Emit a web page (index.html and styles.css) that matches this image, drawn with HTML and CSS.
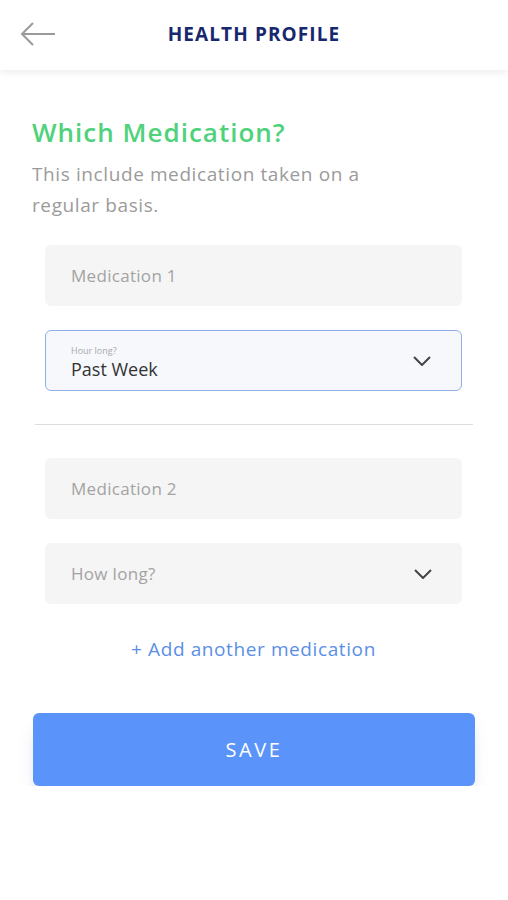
FILE: index.html
```html
<!DOCTYPE html>
<html>
<head>
<title>Health Profile</title>
<link rel="stylesheet" href="styles.css">
</head>
<body>
<div class="header">
    <button class="back">
        <svg width="36" height="26" viewBox="0 0 36 26"><path d="M35 13H2M13 2L2 13l11 11" fill="none" stroke="#9a9a9a" stroke-width="2"/></svg>
    </button>
    <h1 class="title">HEALTH PROFILE</h1>
</div>

<div class="content">
    <h2 class="question">Which Medication?</h2>
    <p class="hint">This include medication taken on a<br>regular basis.</p>

    <div class="fields">
        <div class="field">
            <span class="placeholder">Medication 1</span>
        </div>
        <div class="field select active">
            <div class="value">
                <span class="label">Hour long?</span>
                <span class="text">Past Week</span>
            </div>
            <svg class="chev" width="18" height="10" viewBox="0 0 18 10"><path d="M1 1l8 8 8-8" fill="none" stroke="#444" stroke-width="2"/></svg>
        </div>
    </div>

    <hr class="divider">

    <div class="fields">
        <div class="field">
            <span class="placeholder">Medication 2</span>
        </div>
        <div class="field select">
            <span class="placeholder">How long?</span>
            <svg class="chev" width="18" height="10" viewBox="0 0 18 10"><path d="M1 1l8 8 8-8" fill="none" stroke="#444" stroke-width="2"/></svg>
        </div>
    </div>

    <a class="add" href="#">+ Add another medication</a>

    <button class="save">SAVE</button>
</div>
</body>
</html>
```

FILE: styles.css
```css
body {
    margin: 0;
    font-family: "Open Sans", "Lato", sans-serif;
    background: #fff;
}

.header {
    height: 70px;
    display: flex;
    align-items: center;
    justify-content: center;
    position: relative;
    box-shadow: 0 2px 8px rgba(0, 0, 0, 0.08);
}

.back {
    position: absolute;
    left: 20px;
    top: 21px;
    padding: 0;
    border: none;
    background: none;
}

.title {
    margin: 0 0 2px 0;
    font-size: 19px;
    font-weight: 700;
    letter-spacing: 1.1px;
    color: #17286e;
}

.content {
    padding: 44px 33px 0 32px;
}

.question {
    margin: 0;
    font-size: 26px;
    font-weight: 600;
    letter-spacing: 1px;
    color: #4fd27b;
}

.hint {
    margin: 9px 0 0 0;
    font-size: 19px;
    line-height: 31px;
    letter-spacing: 0.6px;
    color: #9b9b9b;
}

.fields {
    display: flex;
    flex-direction: column;
    gap: 24px;
    padding: 0 13px;
}

.content > .fields:first-of-type {
    margin-top: 24px;
}

.field {
    height: 61px;
    box-sizing: border-box;
    background: #f5f5f5;
    border-radius: 6px;
    padding: 0 30px 0 26px;
    display: flex;
    align-items: center;
    justify-content: space-between;
}

.field.active {
    border: 1.5px solid #8eb0e8;
    background: #f6f8fc;
    padding-left: 25px;
}

.placeholder {
    font-size: 17px;
    letter-spacing: 0.3px;
    color: #a3a3a3;
}

.value {
    display: flex;
    flex-direction: column;
    padding-top: 3px;
}

.label {
    font-size: 9px;
    color: #a8a8a8;
}

.text {
    font-size: 18px;
    color: #333;
}

.divider {
    border: none;
    border-top: 1px solid #dddddd;
    margin: 33px 2px 33px 3px;
}

.add {
    display: block;
    text-align: center;
    margin-top: 32px;
    font-size: 19px;
    letter-spacing: 0.6px;
    color: #5b8fe7;
    text-decoration: none;
}

.save {
    display: block;
    width: calc(100% - 1px);
    height: 73px;
    margin: 51px 0 0 1px;
    border: none;
    border-radius: 6px;
    background: #5a94fa;
    color: #fff;
    font-family: inherit;
    font-size: 20px;
    letter-spacing: 2.6px;
    box-shadow: 0 12px 16px -6px rgba(90, 110, 150, 0.35);
}
```
